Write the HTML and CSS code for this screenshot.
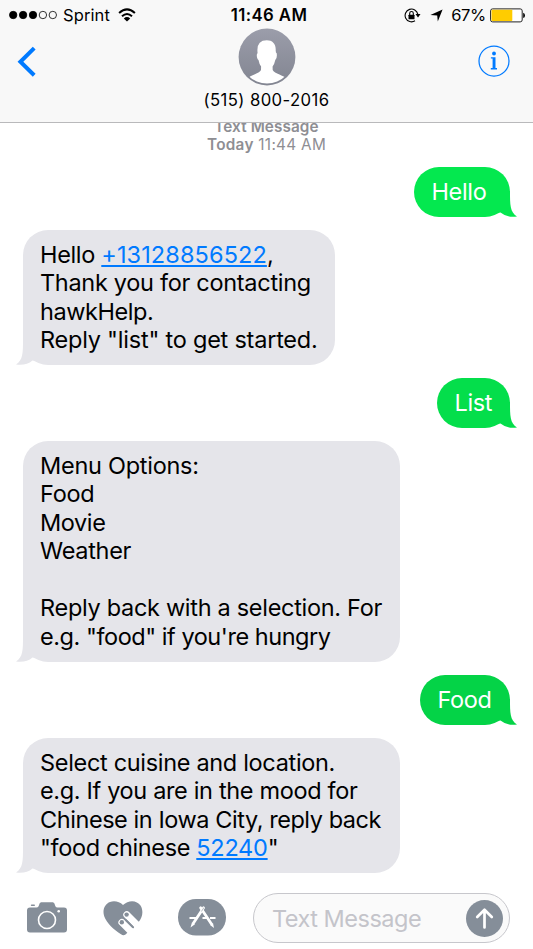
FILE: index.html
```html
<!DOCTYPE html>
<html lang="en">
<head>
<meta charset="utf-8">
<title>Messages</title>
<link rel="stylesheet" href="styles.css">
</head>
<body>
<div class="phone">
  <header class="header">
    <div class="status">
      <div class="status-left">
        <svg class="signal" width="50" height="10" viewBox="0 0 50 10"><g stroke="#000" stroke-width=".8"><circle cx="5.2" cy="5" r="3.7"/><circle cx="15.1" cy="5" r="3.7"/><circle cx="25" cy="5" r="3.7"/><circle cx="34.9" cy="5" r="3.7" fill="none"/><circle cx="44.8" cy="5" r="3.7" fill="none"/></g></svg>
        <span class="carrier">Sprint</span>
        <svg class="wifi" width="18" height="14" viewBox="0 0 18 14"><g fill="none" stroke="#000" stroke-width="2"><path d="M1.1 5.1Q9-2.3 16.9 5.1"/><path d="M4 8.3Q9 3.7 14 8.3"/></g><path d="M5.8 10.4Q9 7.6 12.2 10.4L9 13.4Z"/></svg>
      </div>
      <div class="clock">11:46 AM</div>
      <div class="status-right">
        <svg class="lock" width="17" height="15" viewBox="0 0 17 15"><path d="M13.8 6.2A6.4 6.4 0 1 0 11 12.8" fill="none" stroke="#000" stroke-width="1.1"/><path d="M11.5 6.1H16.5L14 9.4Z"/><rect x="4.5" y="6.7" width="6" height="4.6" rx=".6"/><path d="M5.7 7V5.3a1.8 1.8 0 0 1 3.6 0V7" fill="none" stroke="#000" stroke-width="1.1"/></svg>
        <svg class="arrow" width="13" height="13" viewBox="0 0 13 13"><path d="M12.6.4 7.8 12.6 7.2 6.6.4 6Z"/></svg>
        <span class="percent">67%</span>
        <svg class="battery" width="36" height="15" viewBox="0 0 36 15"><rect x=".6" y=".9" width="31.6" height="13" rx="2" fill="#fff" stroke="#222" stroke-width="1"/><rect x="1.5" y="1.8" width="20.8" height="11.2" rx=".8" fill="#fc0"/><path d="M33.2 4.8Q35 5.4 35 7.4t-1.8 2.6Z"/></svg>
      </div>
    </div>
    <div class="nav">
      <svg class="back" width="20" height="31" viewBox="0 0 20 31"><path d="M17.2 2.1 3.4 15.8 17.2 29.2" fill="none" stroke="#007aff" stroke-width="4"/></svg>
      <div class="contact">
        <svg class="avatar" width="58" height="58" viewBox="0 0 58 58">
          <defs><linearGradient id="shade" x2="0" y2="1"><stop stop-color="#9b9daa"/><stop offset="1" stop-color="#828591"/></linearGradient><clipPath id="disc"><circle cx="29" cy="29" r="26.5"/></clipPath></defs>
          <circle cx="29" cy="29" r="28.4" fill="url(#shade)"/>
          <path clip-path="url(#disc)" fill="#fff" d="M28.8 12.3C34.5 12.3 38 16 37.7 22Q37.6 25 38.7 25.2 39.4 30.5 37.3 32 36.5 36 34.6 38.4L34.7 42C36 45.8 46.5 47 50 52V60H8V52C11.5 47 21.7 45.8 23 42L23.1 38.4Q21.2 36 20.5 32C18.3 30.5 18.5 25.2 19.6 25.2Q18 12.3 28.8 12.3Z"/>
        </svg>
        <div class="number">(515) 800-2016</div>
      </div>
      <svg class="info" width="32" height="32" viewBox="0 0 32 32"><circle cx="16" cy="16" r="15" fill="none" stroke="#007aff" stroke-width="1.25"/><g fill="#007aff"><circle cx="16" cy="8.5" r="1.9"/><path d="M12.9 12.3H17.5V23.1H19V24.4H12.8V23.1H14.6V13.6H12.9Z"/></g></svg>
    </div>
  </header>

  <main class="thread">
    <div class="stamp"><b class="service">Text Message</b><br><b>Today</b> 11:44 AM</div>

    <div class="bubble sent bright"><span class="hi">Hello</span><svg class="tail" width="22" height="26" viewBox="0 0 22 26"><path d="M0 0H15C15 14 15 21 22 25.5Q12 27 5.5 21.5L0 22Z"/></svg></div>

    <div class="bubble received narrow">
      <div class="l1">Hello <a>+13128856522</a>,</div><div class="l2">Thank you for contacting</div><div class="l3">hawkHelp.</div><div class="l4">Reply "list" to get started.</div>
      <svg class="tail" width="22" height="26" viewBox="0 0 22 26"><path d="M22 0H7C7 14 7 21 0 25.5Q10 27 16.5 21.5L22 22Z"/></svg>
    </div>

    <div class="bubble sent medium"><span class="list">List</span><svg class="tail" width="22" height="26" viewBox="0 0 22 26"><path d="M0 0H15C15 14 15 21 22 25.5Q12 27 5.5 21.5L0 22Z"/></svg></div>

    <div class="bubble received wide tall">
      <div class="m1">Menu Options:</div><div class="m2">Food</div><div class="m3">Movie</div><div class="m4">Weather</div><div>&nbsp;</div><div class="m5">Reply back with a selection. For</div><div class="m6">e.g. "food" if you're hungry</div>
      <svg class="tail" width="22" height="26" viewBox="0 0 22 26"><path d="M22 0H7C7 14 7 21 0 25.5Q10 27 16.5 21.5L22 22Z"/></svg>
    </div>

    <div class="bubble sent deep"><span class="food">Food</span><svg class="tail" width="22" height="26" viewBox="0 0 22 26"><path d="M0 0H15C15 14 15 21 22 25.5Q12 27 5.5 21.5L0 22Z"/></svg></div>

    <div class="bubble received wide short">
      <div class="s1">Select cuisine and location.</div><div class="s2">e.g. If you are in the mood for</div><div class="s3">Chinese in Iowa City, reply back</div><div class="s4">"food chinese <a>52240</a>"</div>
      <svg class="tail" width="22" height="26" viewBox="0 0 22 26"><path d="M22 0H7C7 14 7 21 0 25.5Q10 27 16.5 21.5L22 22Z"/></svg>
    </div>
  </main>

  <footer class="composer">
    <svg class="camera" width="40" height="31" viewBox="0 0 40 31"><path fill="#858e99" d="M3 5.5H9.5C11.5 5.5 11.7 4 12.3 2.3 12.8.8 13.5.3 15 .3H25C26.5.3 27.2.8 27.7 2.3 28.3 4 28.5 5.5 30.5 5.5H37Q40 5.5 40 8.5V27.4Q40 30.4 37 30.4H3Q0 30.4 0 27.4V8.5Q0 5.5 3 5.5Z"/><rect x="3.8" y="2.4" width="4.2" height="1.7" rx=".8" fill="#858e99"/><circle cx="20" cy="18" r="8.5" fill="none" stroke="#fff" stroke-width="1.6"/><circle cx="31.7" cy="9.3" r="1.3" fill="#fff"/></svg>
    <svg class="heart" width="40" height="35" viewBox="0 0 40 35"><path fill="#858e99" d="M20 4.1C25.5-1.5 34-1 37.5 4.6 40.7 9.8 39.5 16 36.2 20.2L22.5 33.5Q20.5 35 18 33.3C11 29 3.5 22 1.2 15.3-1 8.6 2.2 2.6 7 1 11.5-.5 16.5.6 20 4.1Z"/><g fill="none" stroke="#fff" stroke-linecap="round"><path d="M18.9 21.4 30 32.5" stroke-width="7"/><path d="M23.8 13.8 38 28" stroke-width="7"/></g><path d="M22.8 19 30.2 26.4" stroke="#858e99" stroke-width="1.8" stroke-linecap="round"/><path d="M27.3 17.3 35 25" stroke="#fff" stroke-width="3"/><circle cx="23.6" cy="13.6" r="2.2" fill="#858e99"/><circle cx="18.8" cy="21.2" r="2.2" fill="#858e99"/></svg>
    <svg class="apps" width="48" height="37" viewBox="0 0 48 37"><rect width="48" height="36.6" rx="18" fill="#858e99"/><g fill="none" stroke="#fff"><path d="M11.5 19H20M24.5 19H30M32 19H37.5" stroke-width="2.2"/><path d="M25.6 8.8 15.5 24" stroke-width="2.8" stroke-linecap="round"/><path d="M22.6 8.8 33.3 24.8" stroke-width="2.8" stroke-linecap="round"/></g><path fill="#fff" d="M14 23.2 17 25.2 12.5 28.5ZM32 26 35 24 36 29Z"/><path d="M23.4 12.5 26 8.5" stroke="#858e99" stroke-width=".6"/></svg>
    <div class="field">
      <span class="placeholder">Text Message</span>
      <svg class="send" width="37" height="37" viewBox="0 0 37 37"><circle cx="18.5" cy="18.5" r="18.5" fill="#858e99"/><path d="M18.5 27.5V10M11.2 17 18.5 9.8 25.8 17" fill="none" stroke="#fff" stroke-width="2.7" stroke-linecap="round" stroke-linejoin="round"/></svg>
    </div>
  </footer>
</div>
</body>
</html>
```
FILE: styles.css
```css
* { box-sizing: border-box; }
body { margin: 0; background: #fff; font-family: Inter, "Liberation Sans", sans-serif; color: #000; }
svg { display: block; flex: none; }
.phone { width: 533px; height: 949px; display: flex; flex-direction: column; overflow: hidden; }

.header { height: 123px; flex: none; background: #f8f8f8; border-bottom: 1px solid #b9b9bb; }
.status { height: 29px; display: grid; grid-template-columns: 1fr auto 1fr; align-items: center; font-size: 16.5px; line-height: 30px; padding: 0 7px 0 8px; }
.status-left, .status-right { display: flex; align-items: center; }
.status-right { justify-content: flex-end; }
.carrier { margin-left: 5px; letter-spacing: .1px; }
.wifi { margin-left: 8px; }
.clock { font-weight: 600; font-size: 16.8px; letter-spacing: .4px; padding-left: 4px; }
.arrow { margin-left: 9px; }
.percent { margin-left: 8px; letter-spacing: -.3px; }
.battery { margin-left: 4px; }

.nav { height: 93px; display: grid; grid-template-columns: 1fr auto 1fr; align-items: start; padding: 0 23px 0 17px; }
.back { margin-top: 17px; }
.contact { display: flex; flex-direction: column; align-items: center; margin: -1px -3px 0 3px; }
.number { font-size: 16.7px; line-height: 22px; margin-top: 3px; letter-spacing: .4px; }
.info { justify-self: end; margin-top: 16px; }

.thread { height: 770px; flex: none; display: flex; flex-direction: column; gap: 13px; padding: 0 23px; overflow: hidden; }
.stamp { margin-top: -5.5px; height: 36.5px; text-align: center; font-size: 15.3px; line-height: 18.5px; letter-spacing: .3px; color: #8e8e93; }
.stamp b { font-weight: 600; }
.service { letter-spacing: .1px; }

.bubble { position: relative; border-radius: 25px; font-size: 23.5px; line-height: 28.5px; white-space: nowrap; flex: none; }
.sent { align-self: flex-end; height: 50px; line-height: 49px; padding: 0 17.5px; color: #fff; }
.received { align-self: flex-start; background: #e5e5ea; padding: 10.6px 17px; color: #000; }
.narrow { width: 312px; height: 135px; }
.wide { width: 377px; }
.tall { height: 221px; }
.short { height: 135px; }
.bright { width: 96px; background: #04e84f; }
.medium { width: 73px; background: #04de4b; }
.deep { width: 90px; background: #04d347; }
.tail { position: absolute; bottom: 0; }
.sent .tail { right: -7px; }
.received .tail { left: -7px; }
.received .tail path { fill: #e5e5ea; }
.bright .tail path { fill: #04e84f; }
.medium .tail path { fill: #04de4b; }
.deep .tail path { fill: #04d347; }
.bubble a { color: #007aff; text-decoration: underline; text-decoration-thickness: 1.5px; text-underline-offset: 2px; }

/* Tracking per line */
.hi, .list, .food { letter-spacing: -.35px; }
.l1 { letter-spacing: -.33px; }
.l1 a { letter-spacing: .1px; }
.l2, .m2, .m4, .m5 { letter-spacing: -.3px; }
.l3, .s3 { letter-spacing: -.44px; }
.l4 { letter-spacing: -.23px; }
.m1 { letter-spacing: -.27px; }
.m3 { letter-spacing: -.4px; }
.m6 { letter-spacing: -.46px; }
.s1 { letter-spacing: -.32px; }
.s2 { letter-spacing: -.34px; }
.s4 { letter-spacing: -.37px; }
.s4 a { letter-spacing: -.25px; }

.composer { height: 56px; flex: none; display: flex; align-items: flex-start; padding-left: 27px; }
.camera { margin-top: 9px; }
.heart { margin: 8px 0 0 36px; }
.apps { margin: 6px 0 0 35px; }
.field { margin-left: 27px; width: 257px; height: 50px; border: 1.4px solid #c7c7cc; border-radius: 25px; background: #fafafa; display: flex; align-items: center; justify-content: space-between; padding: 0 6px 0 18px; }
.placeholder { font-size: 23.5px; color: #c4c4ca; letter-spacing: -.5px; }
```
